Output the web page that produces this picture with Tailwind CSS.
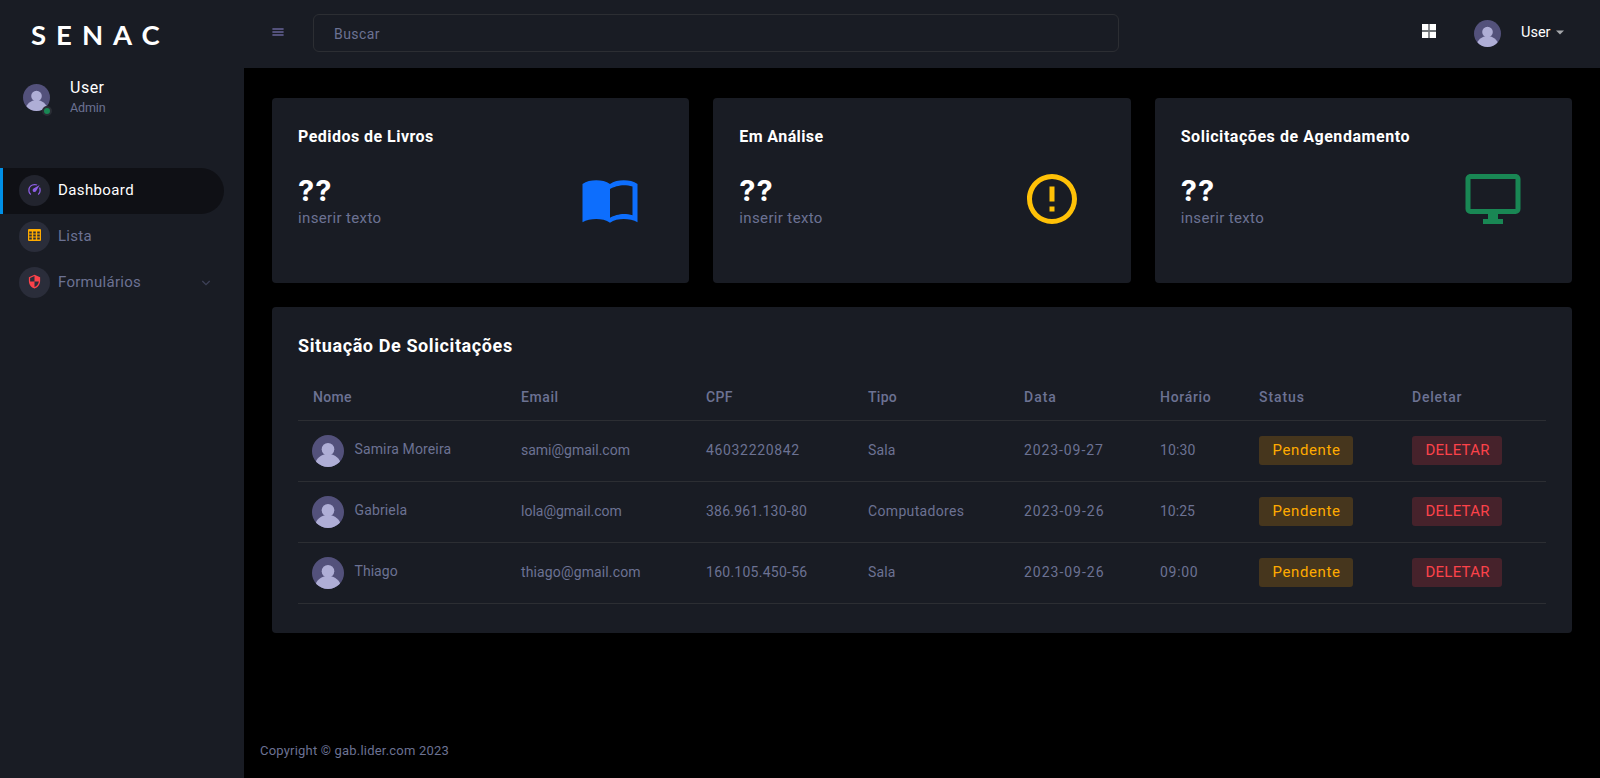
<!DOCTYPE html>
<html lang="pt-BR">
<head>
<meta charset="utf-8">
<title>SENAC</title>
<script src="https://cdn.jsdelivr.net/npm/@tailwindcss/browser@4"></script>
</head>
<body class="flex h-[778px] w-[1600px] overflow-hidden bg-black font-['Roboto','Liberation_Sans',sans-serif] text-[14px] text-[#6c7293]">

<svg class="hidden">
  <symbol id="avatar" viewBox="0 0 32 32">
    <rect width="32" height="32" fill="#53517b"/>
    <circle cx="16" cy="14.2" r="6.3" fill="#afaed6"/>
    <ellipse cx="16" cy="29.5" rx="12.6" ry="10.4" fill="#afaed6"/>
  </symbol>
</svg>

<aside class="flex h-full w-[244px] shrink-0 flex-col bg-[#191c24]">
  <div class="h-[68px] pl-[31px] pt-[15px] font-['Lato',sans-serif] text-[27.5px] leading-[39px] font-bold tracking-[10px] text-white">SENAC</div>
  <div class="flex h-[99px] pl-[23px] pt-[8px]">
    <div class="relative mt-[8px] h-[27px] w-[27px]">
      <svg class="h-[27px] w-[27px] rounded-full"><use href="#avatar"/></svg>
      <span class="absolute -right-[2px] -bottom-[5px] h-[10px] w-[10px] rounded-full border-2 border-[#2a2d35] bg-[#198754]"></span>
    </div>
    <div class="ml-[20px] pt-px">
      <div class="text-[16px] leading-[22px] tracking-[0.5px] text-white">User</div>
      <div class="text-[12.5px] leading-[18px] tracking-[-0.1px]">Admin</div>
    </div>
  </div>
  <nav class="pt-px text-[15px]">
    <a class="flex h-[46px] w-[224px] items-center rounded-r-full border-l-[3px] border-[#0090e7] bg-[#0f1015] pb-px pl-[16px] text-white">
      <span class="flex h-[31px] w-[31px] items-center justify-center rounded-full bg-[#22242e]">
        <svg class="mb-[2px] h-[15px] w-[15px]" viewBox="0 0 24 24" fill="#8f5fe8"><path d="M12,16A3,3 0 0,1 9,13C9,11.88 9.61,10.9 10.5,10.39L20.21,4.77L14.68,14.35C14.18,15.33 13.17,16 12,16M12,3C13.81,3 15.5,3.5 16.97,4.32L14.87,5.53C14,5.19 13,5 12,5A8,8 0 0,0 4,13C4,15.21 4.89,17.21 6.34,18.65H6.35C6.74,19.04 6.74,19.67 6.35,20.06C5.96,20.45 5.32,20.45 4.93,20.07C3.12,18.26 2,15.76 2,13A10,10 0 0,1 12,3M22,13C22,15.76 20.88,18.26 19.07,20.07C18.68,20.45 18.05,20.45 17.66,20.06C17.27,19.67 17.27,19.04 17.66,18.65C19.11,17.2 20,15.21 20,13C20,12 19.81,11 19.46,10.1L20.67,8C21.5,9.5 22,11.18 22,13Z"/></svg>
      </span>
      <span class="ml-[8px] pb-px tracking-[0.38px]">Dashboard</span>
    </a>
    <a class="flex h-[46px] items-center pb-px pl-[19px]">
      <span class="flex h-[31px] w-[31px] items-center justify-center rounded-full bg-[#2a2d3a]">
        <svg class="mb-[3px] h-[12px] w-[13px]" viewBox="0 0 13 12"><path fill="#ffab00" fill-rule="evenodd" d="M1 0h11a1 1 0 0 1 1 1v10a1 1 0 0 1-1 1H1a1 1 0 0 1-1-1V1A1 1 0 0 1 1 0zM1.2 2.6v1.8h2.6V2.6zm4 0v1.8h2.6V2.6zm4 0v1.8h2.6V2.6zM1.2 5.6v1.8h2.6V5.6zm4 0v1.8h2.6V5.6zm4 0v1.8h2.6V5.6zM1.2 8.6v1.8h2.6V8.6zm4 0v1.8h2.6V8.6zm4 0v1.8h2.6V8.6z"/></svg>
      </span>
      <span class="ml-[8px] pb-px tracking-[0.25px]">Lista</span>
    </a>
    <a class="flex h-[46px] items-center pb-px pl-[19px]">
      <span class="flex h-[31px] w-[31px] items-center justify-center rounded-full bg-[#2a2d3a]">
        <svg class="mb-[3px] h-[15px] w-[15px]" viewBox="0 0 24 24" fill="#fc424a"><path d="M12,12H19C18.47,16.11 15.72,19.78 12,20.92V12H5V6.3L12,3.19M12,1L3,5V11C3,16.55 6.84,21.73 12,23C17.16,21.73 21,16.55 21,11V5"/></svg>
      </span>
      <span class="ml-[8px] pb-px tracking-[0.28px]">Formulários</span>
      <svg class="mt-[1px] mr-[33px] ml-auto h-[6px] w-[10px]" viewBox="0 0 10 6" fill="none" stroke="#3d4157" stroke-width="1.3"><path d="M1.3 1L5 4.7L8.7 1"/></svg>
    </a>
  </nav>
</aside>

<div class="flex h-full flex-1 flex-col">
  <header class="flex h-[68px] shrink-0 bg-[#191c24]">
    <svg class="mt-[28px] ml-[28px] h-[8px] w-[12px]" viewBox="0 0 12 8" fill="#53517b"><path d="M.4 0h11.2v2H.4zM.4 3h11.2v2H.4zM.4 6h11.2v2H.4z"/></svg>
    <div class="mt-[14px] ml-[29px] h-[38px] w-[806px] rounded-[6px] border border-[#2c2e33] pl-[20px] text-[14px] leading-[38px] tracking-[0.45px]">Buscar</div>
    <svg class="mt-[24px] ml-[303px] h-[14px] w-[14px]" viewBox="0 0 14 14"><path fill="#fff" d="M0 0h6.5v6H0zM7.5 0H14v6H7.5zM0 8h6.5v6H0zM7.5 8H14v6H7.5z"/><path fill="#6f7377" d="M0 6h14v2H0z"/></svg>
    <svg class="mt-[20px] ml-[38px] h-[27px] w-[27px] rounded-full"><use href="#avatar"/></svg>
    <span class="mt-[23px] ml-[20px] text-[14.5px] leading-[20px] text-white">User</span>
    <svg class="mt-[30px] ml-[5px] h-[5px] w-[8px]" viewBox="0 0 8 5"><path fill="#a5a7ab" d="M0 .5h8L4 4.5z"/></svg>
  </header>

  <main class="flex flex-1 flex-col gap-6 px-7 pt-[30px]">
    <section class="grid h-[185px] grid-cols-3 gap-6">
      <div class="flex rounded-[4px] bg-[#191c24] pl-[26px]">
        <div class="w-[282px] pt-[29px]">
          <h5 class="text-[16px] leading-5 font-bold tracking-[0.47px] whitespace-nowrap text-white">Pedidos de Livros</h5>
          <div class="mt-[28px] font-['Inter',sans-serif] text-[29px] leading-8 font-bold tracking-[1px] text-white">??</div>
          <div class="mt-[1px] text-[15px] leading-5 tracking-[0.36px]">inserir texto</div>
        </div>
        <svg class="mt-[71px] h-[60px] w-[60px]" viewBox="0 0 24 24"><path fill="#0d6efd" fill-rule="evenodd" d="M6.5 4.5C4.55 4.5 2.45 4.9 1 6V21.3C2.45 20.4 4.55 20 6.5 20S10.55 20.4 12 21.5C13.45 20.4 15.55 20 17.5 20S21.55 20.4 23 21.3V6C21.55 4.9 19.45 4.5 17.5 4.5S13.45 4.9 12 6C10.55 4.9 8.45 4.5 6.5 4.5ZM12 8C13.35 7.15 15.8 6.5 17.5 6.5C18.7 6.5 19.9 6.65 21 7V18.5C19.9 18.15 18.7 18 17.5 18C15.8 18 13.35 18.65 12 19.5Z"/></svg>
      </div>
      <div class="flex rounded-[4px] bg-[#191c24] pl-[26px]">
        <div class="w-[282.5px] pt-[29px]">
          <h5 class="text-[16px] leading-5 font-bold tracking-[0.4px] whitespace-nowrap text-white">Em Análise</h5>
          <div class="mt-[28px] font-['Inter',sans-serif] text-[29px] leading-8 font-bold tracking-[1px] text-white">??</div>
          <div class="mt-[1px] text-[15px] leading-5 tracking-[0.36px]">inserir texto</div>
        </div>
        <svg class="mt-[71px] h-[60px] w-[60px]" viewBox="0 0 24 24" fill="#ffc107"><path d="M11,15H13V17H11V15M11,7H13V13H11V7M12,2C6.47,2 2,6.5 2,12A10,10 0 0,0 12,22A10,10 0 0,0 22,12A10,10 0 0,0 12,2M12,20A8,8 0 0,1 4,12A8,8 0 0,1 12,4A8,8 0 0,1 20,12A8,8 0 0,1 12,20Z"/></svg>
      </div>
      <div class="flex rounded-[4px] bg-[#191c24] pl-[26px]">
        <div class="w-[282.5px] pt-[29px]">
          <h5 class="text-[16px] leading-5 font-bold tracking-[0.55px] whitespace-nowrap text-white">Solicitações de Agendamento</h5>
          <div class="mt-[28px] font-['Inter',sans-serif] text-[29px] leading-8 font-bold tracking-[1px] text-white">??</div>
          <div class="mt-[1px] text-[15px] leading-5 tracking-[0.36px]">inserir texto</div>
        </div>
        <svg class="mt-[71px] h-[60px] w-[60px]" viewBox="0 0 24 24" fill="#198754"><path d="M21,16H3V4H21M21,2H3C1.89,2 1,2.89 1,4V16A2,2 0 0,0 3,18H10V20H8V22H16V20H14V18H21A2,2 0 0,0 23,16V4C23,2.89 22.1,2 21,2Z"/></svg>
      </div>
    </section>

    <section class="h-[326px] rounded-[4px] bg-[#191c24] px-[26px] pt-[27px]">
      <h4 class="text-[18px] leading-6 font-bold tracking-[0.6px] text-white">Situação De Solicitações</h4>
      <table class="mt-4 w-full table-fixed border-separate border-spacing-0 text-left whitespace-nowrap [&_td]:border-b [&_td]:border-[#2c2e33] [&_td]:p-0 [&_td]:pb-[2px] [&_td]:pl-[15px] [&_th]:border-b [&_th]:border-[#2c2e33] [&_th]:p-0 [&_th]:pl-[15px] [&_th]:font-medium">
        <colgroup><col class="w-[208px]"><col class="w-[185px]"><col class="w-[162px]"><col class="w-[156px]"><col class="w-[136px]"><col class="w-[99px]"><col class="w-[153px]"><col class="w-[149px]"></colgroup>
        <thead>
          <tr class="h-[47px]"><th><span class="tracking-[0.35px]">Nome</span></th><th><span class="tracking-[0.6px]">Email</span></th><th><span class="tracking-[0.4px]">CPF</span></th><th><span class="tracking-[0.3px]">Tipo</span></th><th><span class="tracking-[1px]">Data</span></th><th><span class="tracking-[0.7px]">Horário</span></th><th><span class="tracking-[0.9px]">Status</span></th><th><span class="tracking-[0.76px]">Deletar</span></th></tr>
        </thead>
        <tbody>
          <tr class="h-[61px]">
            <td><div class="-ml-px flex items-center"><svg class="mt-px h-8 w-8 rounded-full"><use href="#avatar"/></svg><span class="mb-px ml-[10.5px] tracking-[0.13px]">Samira Moreira</span></div></td>
            <td>sami@gmail.com</td>
            <td><span class="tracking-[0.66px]">46032220842</span></td>
            <td><span class="tracking-[0.1px]">Sala</span></td>
            <td><span class="tracking-[0.9px]">2023-09-27</span></td>
            <td><span class="tracking-[0.15px]">10:30</span></td>
            <td><span class="block h-[29px] w-[94px] rounded-[3px] bg-[#46361d] pl-[13.5px] text-[15px] leading-[28px] tracking-[0.6px] text-[#ffab00]">Pendente</span></td>
            <td><span class="block h-[29px] w-[90px] rounded-[3px] bg-[#46222b] pl-[13.5px] text-[15px] leading-[28px] tracking-[0.25px] text-[#fc424a]">DELETAR</span></td>
          </tr>
          <tr class="h-[61px]">
            <td><div class="-ml-px flex items-center"><svg class="mt-px h-8 w-8 rounded-full"><use href="#avatar"/></svg><span class="mb-px ml-[10.5px] tracking-[0.14px]">Gabriela</span></div></td>
            <td>lola@gmail.com</td>
            <td><span class="tracking-[0.24px]">386.961.130-80</span></td>
            <td><span class="tracking-[0.34px]">Computadores</span></td>
            <td><span class="tracking-[0.98px]">2023-09-26</span></td>
            <td>10:25</td>
            <td><span class="block h-[29px] w-[94px] rounded-[3px] bg-[#46361d] pl-[13.5px] text-[15px] leading-[28px] tracking-[0.6px] text-[#ffab00]">Pendente</span></td>
            <td><span class="block h-[29px] w-[90px] rounded-[3px] bg-[#46222b] pl-[13.5px] text-[15px] leading-[28px] tracking-[0.25px] text-[#fc424a]">DELETAR</span></td>
          </tr>
          <tr class="h-[61px]">
            <td><div class="-ml-px flex items-center"><svg class="mt-px h-8 w-8 rounded-full"><use href="#avatar"/></svg><span class="mb-px ml-[10.5px] tracking-[0.05px]">Thiago</span></div></td>
            <td><span class="tracking-[0.13px]">thiago@gmail.com</span></td>
            <td><span class="tracking-[0.26px]">160.105.450-56</span></td>
            <td><span class="tracking-[0.1px]">Sala</span></td>
            <td><span class="tracking-[0.98px]">2023-09-26</span></td>
            <td><span class="tracking-[0.7px]">09:00</span></td>
            <td><span class="block h-[29px] w-[94px] rounded-[3px] bg-[#46361d] pl-[13.5px] text-[15px] leading-[28px] tracking-[0.6px] text-[#ffab00]">Pendente</span></td>
            <td><span class="block h-[29px] w-[90px] rounded-[3px] bg-[#46222b] pl-[13.5px] text-[15px] leading-[28px] tracking-[0.25px] text-[#fc424a]">DELETAR</span></td>
          </tr>
        </tbody>
      </table>
    </section>
  </main>

  <footer class="h-[37px] shrink-0 pl-4 text-[13px] leading-5 tracking-[0.2px]">Copyright © gab.lider.com 2023</footer>
</div>
</body>
</html>
